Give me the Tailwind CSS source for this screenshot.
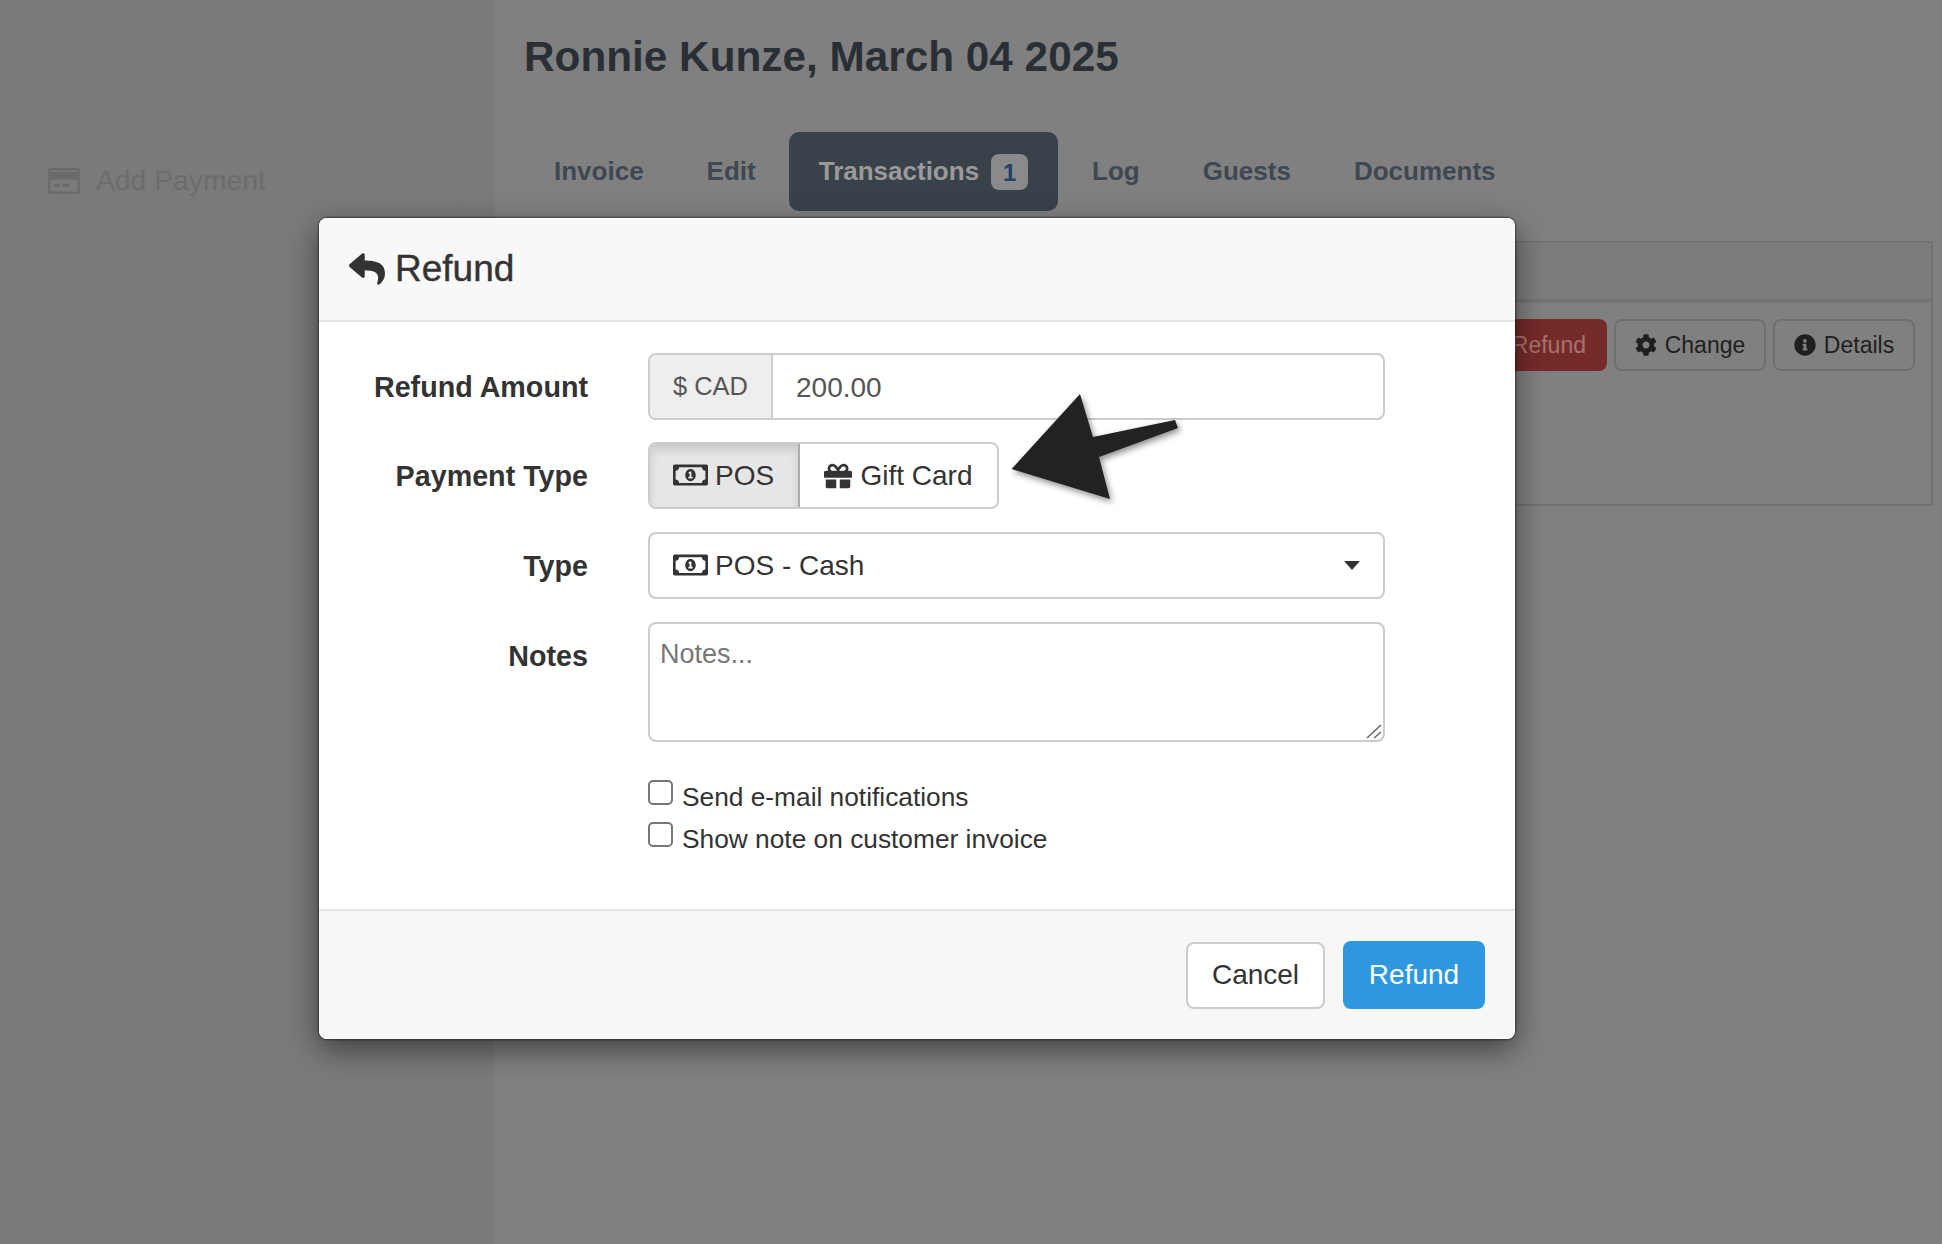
<!DOCTYPE html>
<html lang="en">
<head>
  <meta charset="UTF-8">
  <title>Refund - Ronnie Kunze</title>
  <script src="https://cdn.jsdelivr.net/npm/@tailwindcss/browser@4"></script>
  <meta name="viewport" content="width=device-width, initial-scale=1.0">
</head>
<body class="relative w-[1942px] h-[1244px] overflow-hidden bg-[#808080] font-['Liberation_Sans',Arial,sans-serif] text-[28px] text-[#333]">
  <!-- dimmed page behind the modal -->
  <div class="flex h-full">
    <aside class="w-[494px] h-full bg-[#7a7a7a] pt-[148px] pl-[26px] pr-[36px] shrink-0">
      <div class="flex items-center h-[65px] pl-[21px] gap-[16px] border border-[#787878] rounded-lg text-[#6c6c6c] text-[28.3px]">
        <svg class="w-[32px] h-[26px]" viewBox="0 0 32 26"><path fill="#6b6b6b" fill-rule="evenodd" d="M3 0h26a3 3 0 0 1 3 3v20a3 3 0 0 1-3 3H3a3 3 0 0 1-3-3V3a3 3 0 0 1 3-3zm0 2.5a.5.5 0 0 0-.5.5v1h27V3a.5.5 0 0 0-.5-.5zM2.500 11.500V23a.5.5 0 0 0 .5.5h26a.5.5 0 0 0 .5-.5V11.500zM6 16h6v3H6zm8 0h7v3h-7z"/></svg>
        <span>Add Payment</span>
      </div>
    </aside>
    <main class="flex-1 pl-[30px] pr-[9px]">
      <h1 class="h-[132px] pt-[33px] text-[42.3px] leading-[48px] font-bold text-[#2a2f35]">Ronnie Kunze, March 04 2025</h1>
      <nav class="flex gap-[3px] h-[79px] text-[26px] font-bold text-[#3f4851]">
        <a class="flex items-center px-[30px]">Invoice</a>
        <a class="flex items-center px-[30px]">Edit</a>
        <a class="flex items-center gap-[12px] px-[30px] rounded-[10px] bg-[#39424b] text-[#9a9a9a]">Transactions <span class="flex items-center justify-center w-[37px] h-[36px] pt-[3px] rounded-[8px] bg-[#8a8a8a] text-[#1d4468] text-[24px] font-bold">1</span></a>
        <a class="flex items-center px-[30px] ml-[1px]">Log</a>
        <a class="flex items-center px-[30px]">Guests</a>
        <a class="flex items-center px-[30px]">Documents</a>
      </nav>
      <section class="mt-[30px] h-[265px] border-2 border-[#727272]">
        <div class="h-[60px] bg-[#7c7c7c] border-b-4 border-[#747474]"></div>
        <div class="flex justify-end gap-[7px] pt-[16px] pr-[16px] text-[23px] text-[#1f1f1f]">
          <button class="flex items-center h-[52px] px-[21px] rounded-lg bg-[#752b2a] text-[#a87270]">Refund</button>
          <button class="flex items-center gap-[8px] h-[52px] w-[152px] justify-center rounded-lg border-2 border-[#6f6f6f]">
            <svg class="w-[22px] h-[22px]" viewBox="0 0 512 512"><path fill="#1f1f1f" d="M487.4 315.7l-42.6-24.6c4.3-23.2 4.3-47 0-70.2l42.6-24.6c4.9-2.8 7.1-8.6 5.5-14-11.1-35.6-30-67.8-54.7-94.6-3.8-4.1-10-5.1-14.8-2.3L380.8 110c-17.9-15.4-38.5-27.3-60.8-35.1V25.8c0-5.6-3.9-10.5-9.4-11.7-36.7-8.2-74.3-7.8-109.2 0-5.5 1.2-9.4 6.1-9.4 11.7V75c-22.2 7.9-42.8 19.8-60.8 35.1L88.7 85.5c-4.9-2.8-11-1.9-14.8 2.3-24.7 26.7-43.6 58.9-54.7 94.6-1.7 5.4.6 11.2 5.5 14L67.3 221c-4.3 23.2-4.3 47 0 70.2l-42.6 24.6c-4.9 2.8-7.1 8.6-5.5 14 11.1 35.6 30 67.8 54.7 94.6 3.8 4.1 10 5.1 14.8 2.3l42.6-24.6c17.9 15.4 38.5 27.3 60.8 35.1v49.2c0 5.6 3.9 10.5 9.4 11.7 36.7 8.2 74.3 7.8 109.2 0 5.5-1.2 9.4-6.1 9.4-11.7v-49.2c22.2-7.9 42.8-19.8 60.8-35.1l42.6 24.6c4.9 2.8 11 1.9 14.8-2.3 24.7-26.7 43.6-58.9 54.7-94.6 1.5-5.5-.7-11.3-5.6-14.1zM256 336c-44.1 0-80-35.9-80-80s35.9-80 80-80 80 35.9 80 80-35.9 80-80 80z"/></svg>
            Change
          </button>
          <button class="flex items-center gap-[8px] h-[52px] w-[142px] justify-center rounded-lg border-2 border-[#6f6f6f]">
            <svg class="w-[22px] h-[22px]" viewBox="0 0 512 512"><path fill="#1f1f1f" d="M256 8C119.043 8 8 119.083 8 256c0 136.997 111.043 248 248 248s248-111.003 248-248C504 119.083 392.957 8 256 8zm0 110c23.196 0 42 18.804 42 42s-18.804 42-42 42-42-18.804-42-42 18.804-42 42-42zm56 254c0 6.627-5.373 12-12 12h-88c-6.627 0-12-5.373-12-12v-24c0-6.627 5.373-12 12-12h12v-64h-12c-6.627 0-12-5.373-12-12v-24c0-6.627 5.373-12 12-12h64c6.627 0 12 5.373 12 12v100h12c6.627 0 12 5.373 12 12v24z"/></svg>
            Details
          </button>
        </div>
      </section>
    </main>
  </div>

  <!-- Modal -->
  <div class="absolute left-[319px] top-[218px] w-[1196px] h-[821px] flex flex-col bg-white rounded-lg shadow-[0_0_0_1.5px_rgba(0,0,0,0.3),0_10px_30px_rgba(0,0,0,0.5)] overflow-hidden">
    <div class="flex items-center gap-[10px] h-[104px] pl-[30px] bg-[#f8f8f8] border-b-2 border-[#e5e5e5] text-[37px] [-webkit-text-stroke:0.4px_#333]">
      <svg class="w-[36px] h-[36px]" viewBox="0 0 512 512"><path fill="#333" d="M8.309 189.836L184.313 37.851C199.719 24.546 224 35.347 224 56.015v80.053c160.629 1.839 288 34.032 288 186.258 0 61.441-39.581 122.309-83.333 154.132-13.653 9.931-33.111-2.533-28.077-18.631 45.344-145.012-21.507-183.51-176.59-185.742V360c0 20.7-24.3 31.453-39.687 18.164l-176.004-152c-11.071-9.562-11.086-26.753 0-36.328z"/></svg>
      <span>Refund</span>
    </div>

    <form class="flex-1 pt-[31px]">
      <div class="flex mb-[22px] h-[67px]">
        <label class="w-[269px] shrink-0 text-right font-bold text-[28.7px] leading-[69px]">Refund Amount</label>
        <div class="flex ml-[60px] w-[737px] border-2 border-[#ccc] rounded-lg overflow-hidden">
          <span class="flex items-center justify-center w-[123px] bg-[#eee] border-r-2 border-[#ccc] text-[#555] text-[25.4px]">$ CAD</span>
          <input type="text" value="200.00" class="flex-1 pl-[23px] pt-[2px] text-[28px] text-[#555] outline-none">
        </div>
      </div>
      <div class="flex mb-[23px] h-[67px]">
        <label class="w-[269px] shrink-0 text-right font-bold text-[28.7px] leading-[69px]">Payment Type</label>
        <div class="flex ml-[60px] border-2 border-[#ccc] rounded-lg overflow-hidden">
          <div class="flex items-center gap-[7px] w-[150px] pl-[23px] bg-[#e6e6e6] shadow-[inset_0_6px_10px_rgba(0,0,0,0.125)] border-r-2 border-[#adadad]">
            <svg class="w-[35px] h-[28px] -mt-[2px]" viewBox="0 0 640 512"><path fill="#333" d="M320 144c-53.02 0-96 50.14-96 112 0 61.85 42.98 112 96 112 53 0 96-50.13 96-112 0-61.86-42.98-112-96-112zm40 168c0 4.42-3.58 8-8 8h-64c-4.42 0-8-3.58-8-8v-16c0-4.42 3.58-8 8-8h16v-55.44l-.47.31a7.992 7.992 0 0 1-11.09-2.22l-8.88-13.31a7.992 7.992 0 0 1 2.22-11.09l15.33-10.22a23.99 23.99 0 0 1 13.31-4.03H328c4.42 0 8 3.58 8 8v88h16c4.42 0 8 3.58 8 8v16zM608 64H32C14.33 64 0 78.33 0 96v320c0 17.67 14.33 32 32 32h576c17.67 0 32-14.33 32-32V96c0-17.67-14.33-32-32-32zm-16 272c-35.35 0-64 28.65-64 64H112c0-35.35-28.65-64-64-64V176c35.35 0 64-28.65 64-64h416c0 35.35 28.65 64 64 64v160z"/></svg>
            POS
          </div>
          <div class="flex items-center gap-[8px] w-[197px] justify-center">
            <svg class="w-[28px] h-[28px]" viewBox="0 0 512 512"><path fill="#333" d="M32 448c0 17.7 14.3 32 32 32h160V320H32v128zm256 32h160c17.7 0 32-14.3 32-32V320H288v160zm192-320h-42.1c6.2-12.1 10.1-25.5 10.1-40 0-48.5-39.5-88-88-88-41.6 0-68.5 21.3-103 68.3-34.5-47-61.4-68.3-103-68.3-48.5 0-88 39.5-88 88 0 14.5 3.8 27.9 10.1 40H32c-17.7 0-32 14.3-32 32v80c0 8.8 7.2 16 16 16h480c8.8 0 16-7.2 16-16v-80c0-17.7-14.3-32-32-32zm-326.1 0c-22.1 0-40-17.9-40-40s17.9-40 40-40c19.9 0 34.6 3.3 86.1 80h-86.1zm206.1 0h-86.1c51.4-76.5 65.7-80 86.1-80 22.1 0 40 17.9 40 40s-17.9 40-40 40z"/></svg>
            Gift Card
          </div>
        </div>
      </div>
      <div class="flex mb-[23px] h-[67px]">
        <label class="w-[269px] shrink-0 text-right font-bold text-[28.7px] leading-[69px]">Type</label>
        <div class="flex items-center ml-[60px] w-[737px] pl-[23px] pr-[23px] gap-[7px] border-2 border-[#ccc] rounded-lg">
          <svg class="w-[35px] h-[28px] -mt-[2px]" viewBox="0 0 640 512"><path fill="#333" d="M320 144c-53.02 0-96 50.14-96 112 0 61.85 42.98 112 96 112 53 0 96-50.13 96-112 0-61.86-42.98-112-96-112zm40 168c0 4.42-3.58 8-8 8h-64c-4.42 0-8-3.58-8-8v-16c0-4.42 3.58-8 8-8h16v-55.44l-.47.31a7.992 7.992 0 0 1-11.09-2.22l-8.88-13.31a7.992 7.992 0 0 1 2.22-11.09l15.33-10.22a23.99 23.99 0 0 1 13.31-4.03H328c4.42 0 8 3.58 8 8v88h16c4.42 0 8 3.58 8 8v16zM608 64H32C14.33 64 0 78.33 0 96v320c0 17.67 14.33 32 32 32h576c17.67 0 32-14.33 32-32V96c0-17.67-14.33-32-32-32zm-16 272c-35.35 0-64 28.65-64 64H112c0-35.35-28.65-64-64-64V176c35.35 0 64-28.65 64-64h416c0 35.35 28.65 64 64 64v160z"/></svg>
          <span class="flex-1">POS - Cash</span>
          <svg class="w-[16px] h-[9px]" viewBox="0 0 16 9"><path fill="#333" d="M0 0h16L8 9z"/></svg>
        </div>
      </div>
      <div class="flex mb-[38px] h-[120px]">
        <label class="w-[269px] shrink-0 text-right font-bold text-[28.7px] leading-[69px]">Notes</label>
        <div class="relative ml-[60px] w-[737px]">
          <textarea placeholder="Notes..." class="block w-full h-full px-[10px] py-[12px] border-2 border-[#ccc] rounded-lg resize-none text-[27px] leading-[36px] placeholder:text-[#777] outline-none"></textarea>
          <svg class="absolute right-[3px] bottom-[3px] w-[16px] h-[16px]" viewBox="0 0 16 16"><path stroke="#666" stroke-width="1.5" fill="none" d="M1 15L15 2M8 15l7-6"/></svg>
        </div>
      </div>
      <div class="ml-[329px] text-[26.3px] leading-[30px]">
        <label class="flex gap-[9px] h-[42px] items-start">
          <input type="checkbox" class="appearance-none w-[25px] h-[25px] border-2 border-[#767676] rounded-[5px] bg-white">
          <span class="pt-[2px]">Send e-mail notifications</span>
        </label>
        <label class="flex gap-[9px] h-[42px] items-start">
          <input type="checkbox" class="appearance-none w-[25px] h-[25px] border-2 border-[#767676] rounded-[5px] bg-white">
          <span class="pt-[2px]">Show note on customer invoice</span>
        </label>
      </div>
    </form>

    <div class="flex justify-end items-center gap-[18px] h-[130px] pr-[30px] bg-[#f7f7f7] border-t-2 border-[#e5e5e5]">
      <button type="button" class="w-[139px] h-[67px] bg-white border-2 border-[#ccc] rounded-lg">Cancel</button>
      <button type="button" class="w-[142px] h-[68px] bg-[#2d98e0] text-white rounded-lg">Refund</button>
    </div>
  </div>

  <!-- annotation arrow -->
  <svg class="absolute left-[1000px] top-[385px] w-[190px] h-[125px] drop-shadow-[2px_3px_3px_rgba(0,0,0,0.45)]" viewBox="1000 385 190 125"><polygon fill="#222" points="1011.6,469 1080,394 1093,437 1175,420 1178,428 1099,457 1110,499"/></svg>
</body>
</html>
